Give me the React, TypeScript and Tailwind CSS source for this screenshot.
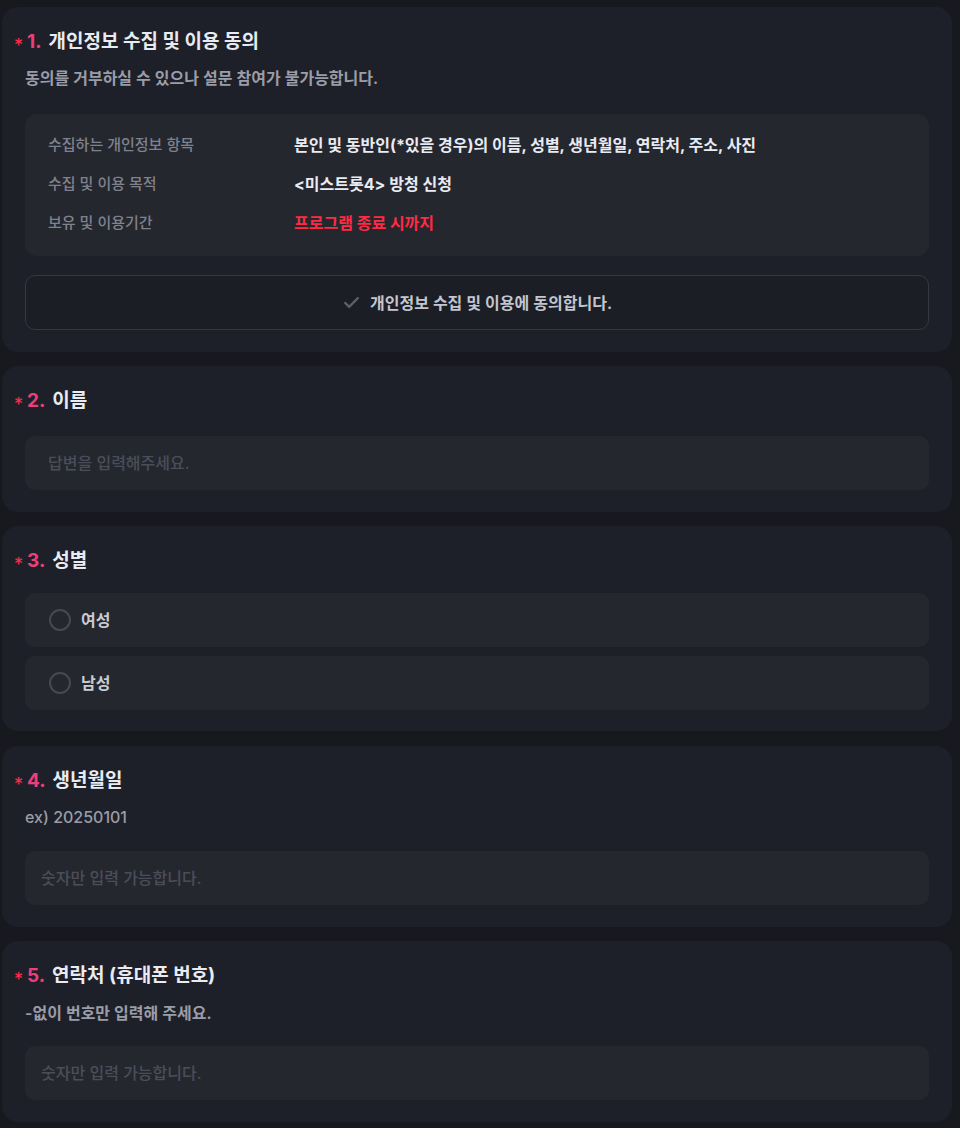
import React from "react";

const font = { fontFamily: 'Inter, "Noto Sans CJK KR", "Noto Sans", sans-serif' };

function Title({ n, text }: { n: number; text: string }) {
  return (
    <div className="flex items-center h-7 -ml-[11px]">
      <span className="text-[18px] text-[#ff2e4d] leading-none mt-[8px] mr-[4px]">*</span>
      <span className="text-[19px] font-bold text-[#ec3f7a] leading-7">{n}.</span>
      <span className="text-[19px] font-bold text-[#e9ebf2] leading-7 ml-[7px]">{text}</span>
    </div>
  );
}

function Card({ children, className = "" }: { children: React.ReactNode; className?: string }) {
  return (
    <div className={"ml-[2px] w-[950px] rounded-[16px] bg-[#1e2029] pt-[21px] px-[23px] " + className}>
      {children}
    </div>
  );
}

function Input({ placeholder, pl }: { placeholder: string; pl: string }) {
  return (
    <div className={"h-[54px] rounded-[10px] bg-[#25272f] flex items-center text-[16px] font-medium text-[#4b4e59] " + pl}>
      {placeholder}
    </div>
  );
}

function Radio({ label }: { label: string }) {
  return (
    <div className="h-[54px] rounded-[10px] bg-[#25272f] flex items-center pl-6">
      <span className="w-[22px] h-[22px] rounded-full border-2 border-[#464953]" />
      <span className="ml-[10px] text-[16px] font-semibold text-[#c9ccd4]">{label}</span>
    </div>
  );
}

export default function App() {
  return (
    <div className="min-h-[1128px] bg-[#17191f] pt-[7px] flex flex-col gap-[14px]" style={font}>
      <Card className="pb-[22px]">
        <Title n={1} text="개인정보 수집 및 이용 동의" />
        <div className="mt-[10px] leading-6 text-[16px] font-semibold text-[#9a9da7]">
          동의를 거부하실 수 있으나 설문 참여가 불가능합니다.
        </div>
        <div className="mt-6 rounded-[12px] bg-[#25272f] pt-[19px] pb-[21px] pl-[23px] grid grid-cols-[246px_1fr] gap-y-[15px]">
          <div className="text-[15px] leading-6 font-medium text-[#7f828d]">수집하는 개인정보 항목</div>
          <div className="text-[16px] leading-6 font-bold text-[#e9ebf2]">
            본인 및 동반인(*있을 경우)의 이름, 성별, 생년월일, 연락처, 주소, 사진
          </div>
          <div className="text-[15px] leading-6 font-medium text-[#7f828d]">수집 및 이용 목적</div>
          <div className="text-[16px] leading-6 font-bold text-[#e9ebf2]">&lt;미스트롯4&gt; 방청 신청</div>
          <div className="text-[15px] leading-6 font-medium text-[#7f828d]">보유 및 이용기간</div>
          <div className="text-[16px] leading-6 font-bold text-[#ff2a44]">프로그램 종료 시까지</div>
        </div>
        <div className="mt-[19px] h-[55px] rounded-[10px] border border-[#353843] bg-[#1c1e26] flex items-center justify-center">
          <svg width="19" height="19" viewBox="0 0 24 24" fill="none" stroke="#5d606b" strokeWidth="2.8" strokeLinecap="round" strokeLinejoin="round">
            <path d="M4 12.5l5 5L20 6.5" />
          </svg>
          <span className="ml-[9px] text-[16px] font-semibold text-[#c3c6ce]">개인정보 수집 및 이용에 동의합니다.</span>
        </div>
      </Card>

      <Card className="pb-[22px]">
        <Title n={2} text="이름" />
        <div className="mt-[21px]">
          <Input placeholder="답변을 입력해주세요." pl="pl-[23px]" />
        </div>
      </Card>

      <Card className="pb-[21px]">
        <Title n={3} text="성별" />
        <div className="mt-[18px] flex flex-col gap-[9px]">
          <Radio label="여성" />
          <Radio label="남성" />
        </div>
      </Card>

      <Card className="pb-[22px] mt-px">
        <Title n={4} text="생년월일" />
        <div className="mt-[10px] leading-6 text-[16px] font-medium text-[#9a9da7]">ex) 20250101</div>
        <div className="mt-[22px]">
          <Input placeholder="숫자만 입력 가능합니다." pl="pl-4" />
        </div>
      </Card>

      <Card className="pb-[22px]">
        <Title n={5} text="연락처 (휴대폰 번호)" />
        <div className="mt-[11px] leading-6 text-[16px] font-semibold text-[#9a9da7]">-없이 번호만 입력해 주세요.</div>
        <div className="mt-[21px]">
          <Input placeholder="숫자만 입력 가능합니다." pl="pl-4" />
        </div>
      </Card>
    </div>
  );
}
